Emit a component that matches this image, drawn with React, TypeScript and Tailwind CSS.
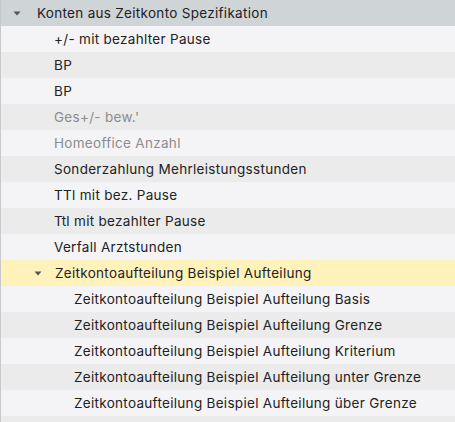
import React from 'react';

type Row = { label: string; level: number; muted?: boolean; group?: boolean; selected?: boolean };

const rows: Row[] = [
  { label: '+/- mit bezahlter Pause', level: 1 },
  { label: 'BP', level: 1 },
  { label: 'BP', level: 1 },
  { label: "Ges+/- bew.'", level: 1, muted: true },
  { label: 'Homeoffice Anzahl', level: 1, muted: true },
  { label: 'Sonderzahlung Mehrleistungsstunden', level: 1 },
  { label: 'TTl mit bez. Pause', level: 1 },
  { label: 'Ttl mit bezahlter Pause', level: 1 },
  { label: 'Verfall Arztstunden', level: 1 },
  { label: 'Zeitkontoaufteilung Beispiel Aufteilung', level: 1, group: true, selected: true },
  { label: 'Zeitkontoaufteilung Beispiel Aufteilung Basis', level: 2 },
  { label: 'Zeitkontoaufteilung Beispiel Aufteilung Grenze', level: 2 },
  { label: 'Zeitkontoaufteilung Beispiel Aufteilung Kriterium', level: 2 },
  { label: 'Zeitkontoaufteilung Beispiel Aufteilung unter Grenze', level: 2 },
  { label: 'Zeitkontoaufteilung Beispiel Aufteilung über Grenze', level: 2 },
  { label: '', level: 1 },
];

const Caret = () => (
  <svg width="8" height="5" viewBox="0 0 8 5" className="shrink-0">
    <path d="M0.5 0.5 L7.5 0.5 L4 4.5 Z" fill="#555" />
  </svg>
);

export default function App() {
  return (
    <div
      className="w-[455px] h-[422px] overflow-hidden bg-[#f4f4f6] border-l border-[#c9c9cb] text-[13.5px] tracking-[0.3px] text-[#222]"
      style={{ fontFamily: 'Inter, "Open Sans", sans-serif' }}
    >
      <div className="h-[26px] flex items-center bg-[#cfd4d7] pl-[12px] gap-[16px]">
        <Caret />
        <span>Konten aus Zeitkonto Spezifikation</span>
      </div>
      {rows.map((r, i) => {
        const bg = r.selected ? 'bg-[#fff2bb]' : i % 2 === 0 ? 'bg-[#f4f4f6]' : 'bg-[#ebebeb]';
        return (
          <div key={i} className={`h-[26px] flex items-center ${bg}`}>
            {r.group ? (
              <div className="flex items-center pl-[33px] gap-[13px]">
                <Caret />
                <span>{r.label}</span>
              </div>
            ) : (
              <span
                className={`${r.level === 2 ? 'pl-[73px]' : 'pl-[53px]'} ${r.muted ? 'text-[#8c8c8c]' : ''}`}
              >
                {r.label}
              </span>
            )}
          </div>
        );
      })}
    </div>
  );
}
